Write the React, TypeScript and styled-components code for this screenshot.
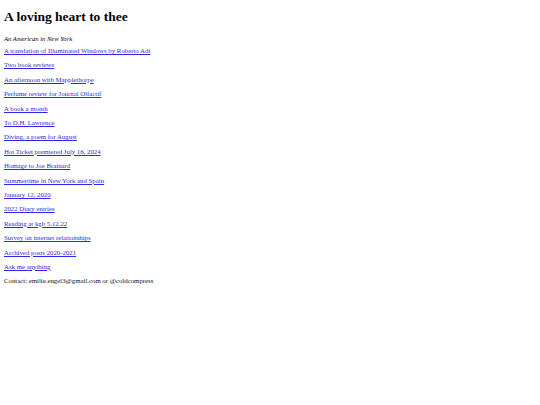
import styled, { createGlobalStyle } from "styled-components";

const GlobalStyle = createGlobalStyle`
    body {
        margin: 0;
        background: #fff;
        font-family: "Liberation Serif", "Times New Roman", serif;
        color: #000;
    }
`;

const Page = styled.div`
    padding: 4px 4px;
`;

const Title = styled.h1`
    font-size: 13.5px;
    font-weight: bold;
    margin: 5px 0 10px;
    line-height: 1.15;
`;

const Subtitle = styled.p`
    font-size: 6.6px;
    font-style: italic;
    margin: 0 0 5px;
    line-height: 1.15;
`;

const LinkList = styled.div`
    display: flex;
    flex-direction: column;
    gap: 6.4px;
`;

const Item = styled.a`
    font-size: 6.8px;
    line-height: 8px;
    color: #2a2ae6;
    text-decoration: underline;
    align-self: flex-start;
`;

const Contact = styled.p`
    font-size: 6.8px;
    line-height: 8px;
    margin: 0;
    color: #111;
`;

const links = [
    "A translation of Illuminated Windows by Roberto Adt",
    "Two book reviews",
    "An afternoon with Mapplethorpe",
    "Perfume review for Journal Olfactif",
    "A book a month",
    "To D.H. Lawrence",
    "Diving, a poem for August",
    "Hot Ticket premiered July 16, 2024",
    "Homage to Joe Brainard",
    "Summertime in New York and Spain",
    "January 12, 2020",
    "2022 Diary entries",
    "Reading at kgb 5.12.22",
    "Survey on internet relationships",
    "Archived posts 2020-2021",
    "Ask me anything",
];

function App() {
    return (
        <Page>
            <GlobalStyle />
            <Title>A loving heart to thee</Title>
            <Subtitle>An American in New York</Subtitle>
            <LinkList>
                {links.map((text) => (
                    <Item key={text} href="#">
                        {text}
                    </Item>
                ))}
                <Contact>Contact: emilie.engel3@gmail.com or @coldcompress</Contact>
            </LinkList>
        </Page>
    );
}
export default App;
